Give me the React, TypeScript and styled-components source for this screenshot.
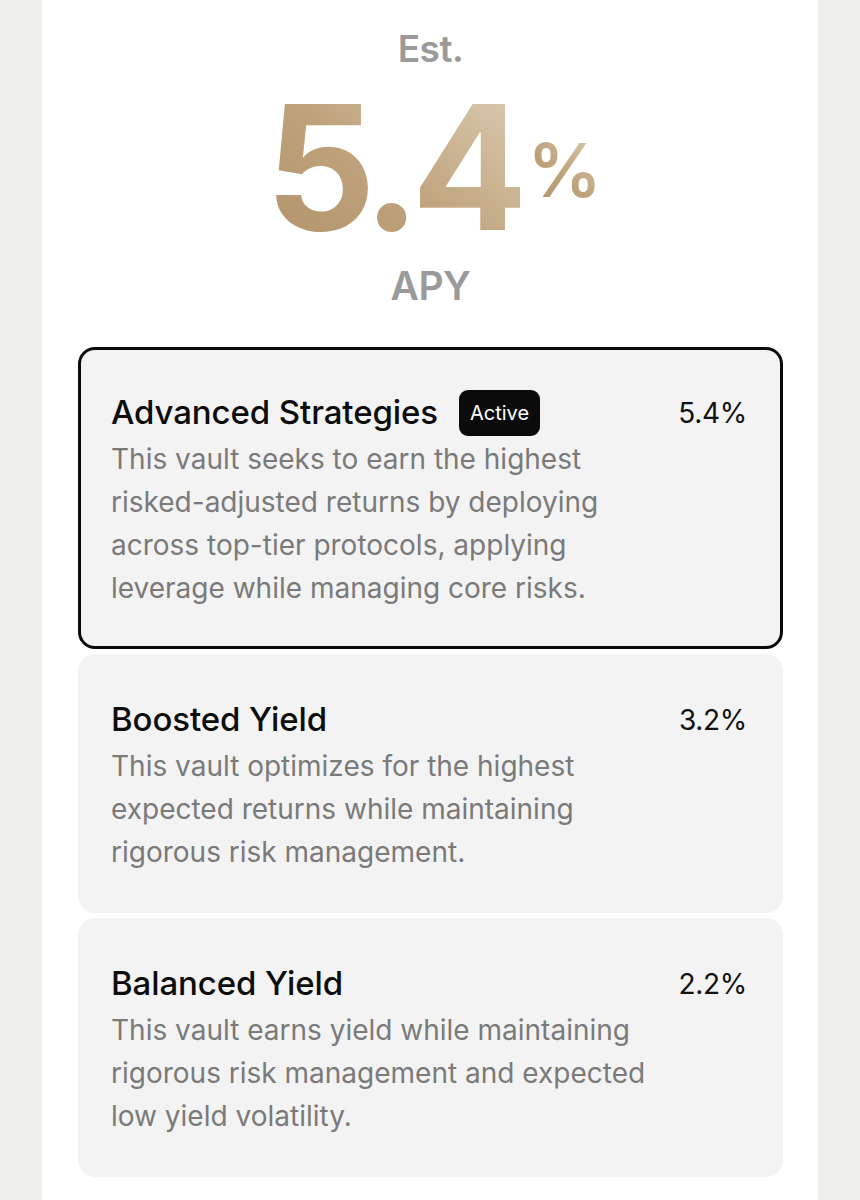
import styled, { createGlobalStyle } from 'styled-components';

const GlobalStyle = createGlobalStyle`
    html, body {
        margin: 0;
        padding: 0;
        background: #eeeeea;
        font-family: Inter, "Noto Sans", "Liberation Sans", sans-serif;
    }
`;

const Column = styled.main`
    width: 776px;
    min-height: 1200px;
    margin: 0 auto;
    background: #ffffff;
    padding: 30px 35px 20px 36px;
    box-sizing: border-box;
`;

const Hero = styled.section`
    display: flex;
    flex-direction: column;
    align-items: center;
`;

const Label = styled.div<{ $size: number }>`
    font-size: ${(p) => p.$size}px;
    line-height: 1;
    font-weight: 600;
    color: #9a9a9a;
    letter-spacing: -0.5px;
`;

const BigRow = styled.div`
    display: flex;
    align-items: flex-start;
    margin: 14px 0 12px 4px;
    gap: 8px;
`;

const gold = `
    background: linear-gradient(40deg, #b2936a 0%, #bea27b 45%, #dccdb3 100%);
    -webkit-background-clip: text;
    background-clip: text;
    color: transparent;
`;

const BigNumber = styled.span`
    font-size: 173px;
    line-height: 1;
    font-weight: 700;
    letter-spacing: -9px;
    ${gold}
`;

const PercentSign = styled.span`
    font-size: 74px;
    line-height: 1;
    font-weight: 600;
    margin-top: 52px;
    letter-spacing: -2px;
    ${gold}
`;

const List = styled.section`
    display: flex;
    flex-direction: column;
    gap: 5px;
    margin-top: 42px;
`;

const Card = styled.article<{ $active?: boolean }>`
    border: 3px solid ${(p) => (p.$active ? '#0b0b0b' : 'transparent')};
    border-radius: 17px;
    background: #f3f3f3;
    padding: 40px 33px 36px 30px;
`;

const Row = styled.div`
    display: flex;
    align-items: center;
    min-height: 46px;
    margin-bottom: 2px;
`;

const Title = styled.h3`
    margin: 0;
    font-size: 33px;
    line-height: 1.2;
    font-weight: 500;
    color: #0d0d0d;
    letter-spacing: -0.1px;
`;

const Badge = styled.span`
    margin-left: 21px;
    height: 46px;
    padding: 0 11px;
    display: inline-flex;
    align-items: center;
    border-radius: 9px;
    background: #0b0b0b;
    color: #ffffff;
    font-size: 20px;
    font-weight: 400;
`;

const Rate = styled.span`
    margin-left: auto;
    font-size: 28px;
    font-weight: 400;
    color: #111111;
    letter-spacing: -0.3px;
`;

const Description = styled.p`
    margin: 0;
    max-width: 556px;
    font-size: 28px;
    line-height: 43px;
    color: #7a7a7a;
`;

const vaults = [
    {
        name: 'Advanced Strategies',
        rate: '5.4%',
        active: true,
        text: 'This vault seeks to earn the highest risked-adjusted returns by deploying across top-tier protocols, applying leverage while managing core risks.',
    },
    {
        name: 'Boosted Yield',
        rate: '3.2%',
        active: false,
        text: 'This vault optimizes for the highest expected returns while maintaining rigorous risk management.',
    },
    {
        name: 'Balanced Yield',
        rate: '2.2%',
        active: false,
        text: 'This vault earns yield while maintaining rigorous risk management and expected low yield volatility.',
    },
];

export default function App() {
    return (
        <>
            <GlobalStyle />
            <Column>
                <Hero>
                    <Label $size={37}>Est.</Label>
                    <BigRow>
                        <BigNumber>5.4</BigNumber>
                        <PercentSign>%</PercentSign>
                    </BigRow>
                    <Label $size={39}>APY</Label>
                </Hero>
                <List>
                    {vaults.map((v) => (
                        <Card key={v.name} $active={v.active}>
                            <Row>
                                <Title>{v.name}</Title>
                                {v.active && <Badge>Active</Badge>}
                                <Rate>{v.rate}</Rate>
                            </Row>
                            <Description>{v.text}</Description>
                        </Card>
                    ))}
                </List>
            </Column>
        </>
    );
}
